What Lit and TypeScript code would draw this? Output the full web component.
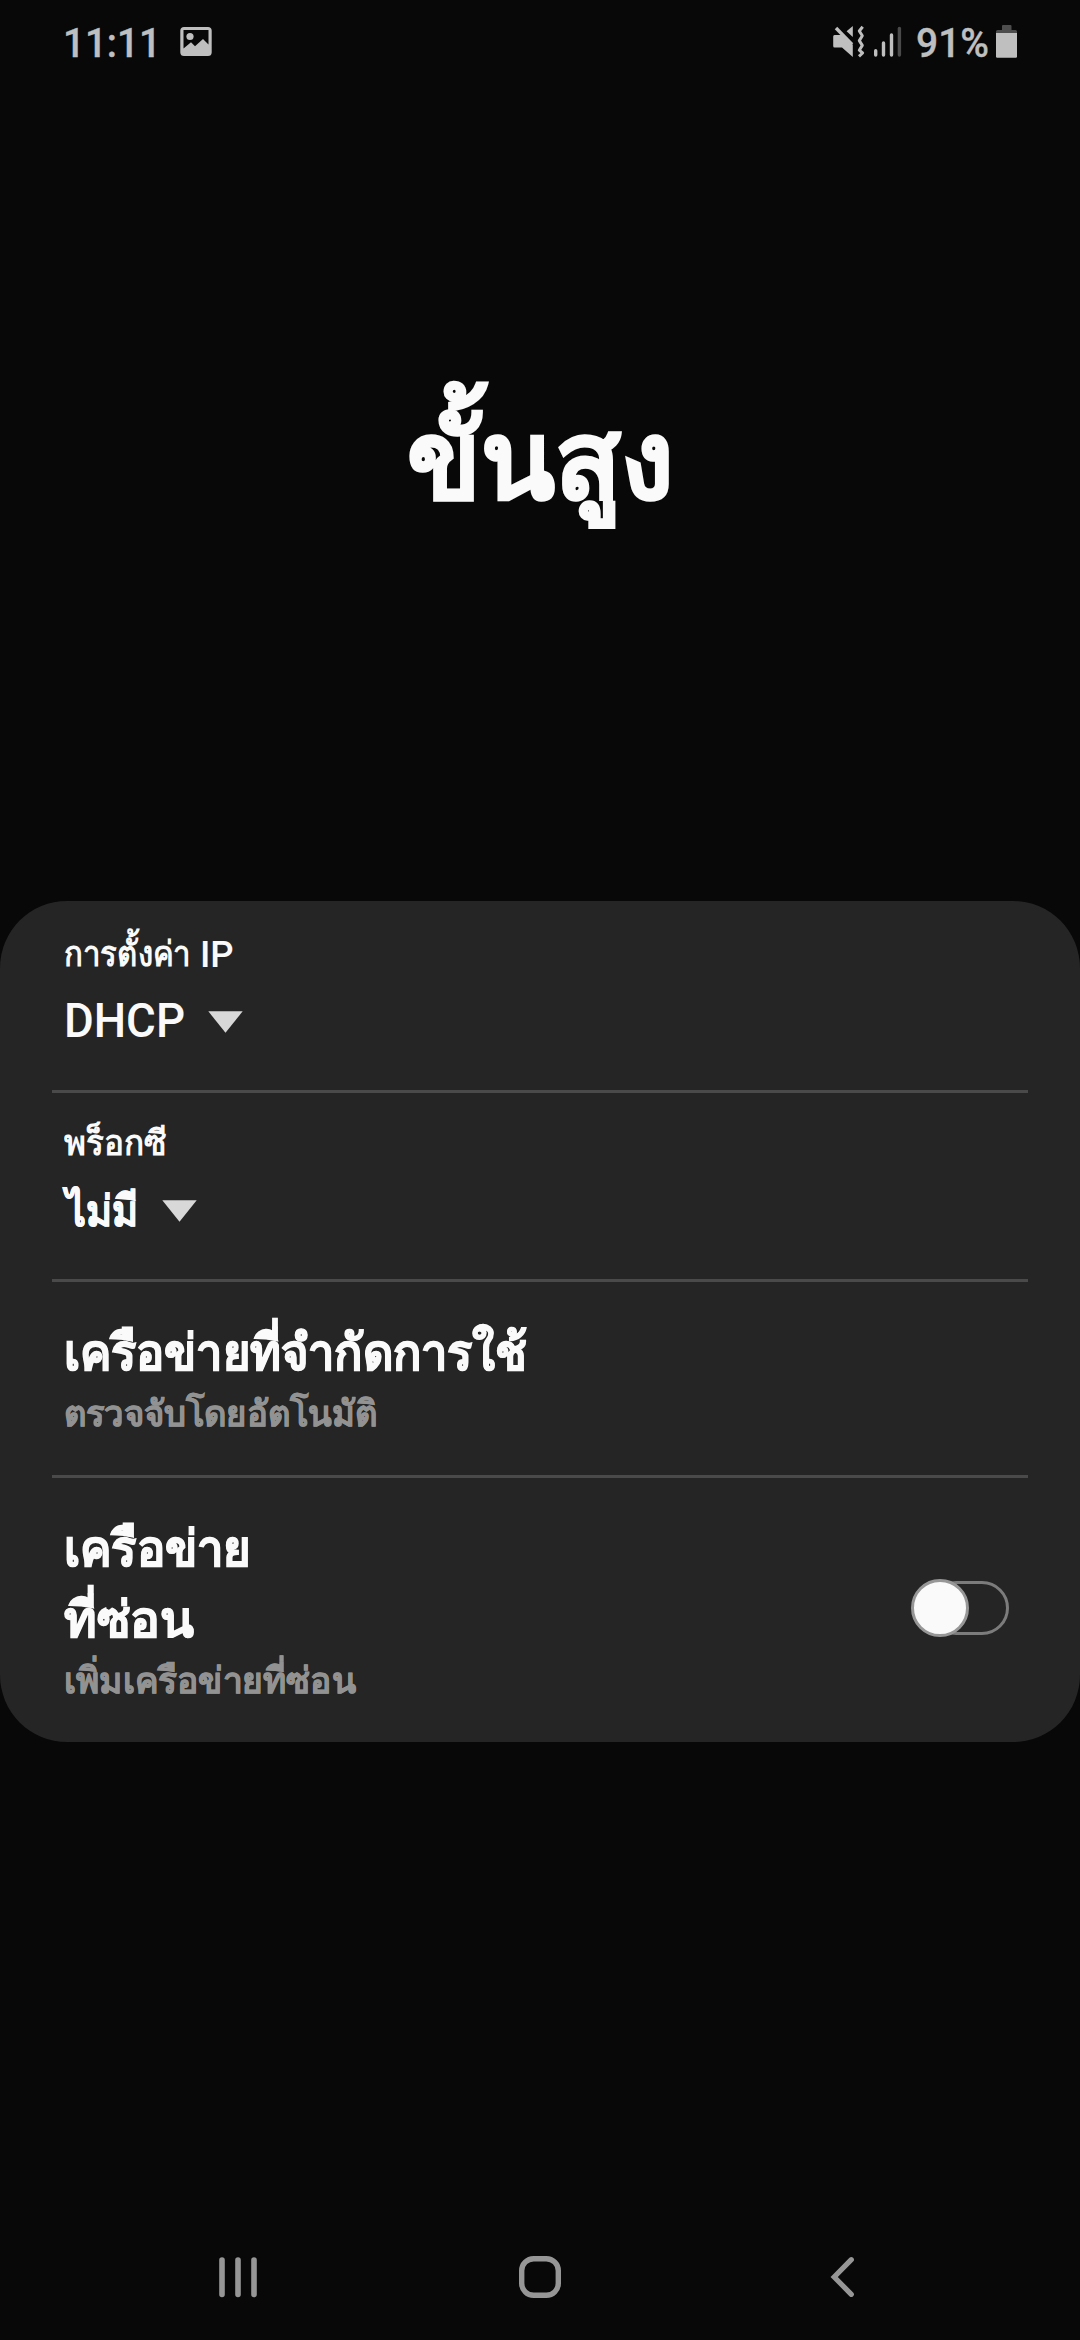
import { LitElement, html, css } from "lit";
import { customElement } from "lit/decorators.js";

const caret = html`<svg class="caret" width="35" height="22" viewBox="0 0 35 22">
  <path d="M0.3 0.3H34.7L17.5 21.8Z" fill="#d8d8d8" />
</svg>`;

@customElement("status-bar")
export class StatusBar extends LitElement {
  static styles = css`
    :host {
      display: flex;
      align-items: flex-start;
      justify-content: space-between;
      height: 84px;
      box-sizing: border-box;
      padding: 18px 62px 0 62.5px;
      color: #bfbfbf;
      font: 500 40.5px/48px Roboto, sans-serif;
    }
    .side {
      display: flex;
      align-items: flex-start;
    }
    .clock,
    .percent {
      padding-top: 1px;
      white-space: nowrap;
      transform-origin: 0 0;
      -webkit-text-stroke: 0.4px currentColor;
    }
    .clock {
      width: 117.5px;
      transform: scaleX(0.953);
    }
    .percent {
      width: 80px;
      transform: scaleX(0.962);
    }
    svg {
      display: block;
    }
    .signal {
      margin-right: 14px;
    }
  `;
  render() {
    return html`
      <div class="side">
        <div class="clock">11:11</div>
        <svg width="33" height="48" viewBox="180 18 33 48">
          <path fill="#bfbfbf" fill-rule="evenodd"
            d="M184 27H208A3.7 3.7 0 0 1 211.7 30.5V52.5A3.7 3.7 0 0 1 208 56H184A3.7 3.7 0 0 1 180.3 52.5V30.5A3.7 3.7 0 0 1 184 27ZM183.5 30V48.5L191 42.3L195 46.3L203 39L208.5 44.5V30Z" />
          <circle cx="190" cy="36.5" r="3.6" fill="#bfbfbf" />
        </svg>
      </div>
      <div class="side">
        <svg class="signal" width="70" height="48" viewBox="832 18 70 48">
          <g fill="#bfbfbf">
            <path d="M834.5 35H843L852.8 44.7V57L842 47.5H834.5Q833.2 47.5 833.2 46V36.5Q833.2 35 834.5 35Z" />
            <path d="M852.8 26V37L846.6 31.2Z" />
          </g>
          <path d="M836 28L852 44.5" stroke="#bfbfbf" stroke-width="3.4" fill="none" />
          <path d="M862.7 26.8L859.3 31L862.3 35.8L859.3 40.6L862.3 45.4L859.3 50.2L862.6 53L859 56.3" fill="none" stroke="#bfbfbf" stroke-width="3" stroke-linejoin="round" />
          <g stroke="#bfbfbf" stroke-width="3.4" stroke-linecap="round">
            <path d="M875.7 50.7V55M883.5 43V55M891.5 35V55" />
            <path d="M899.4 28.4V55" stroke="#4a4a4a" />
          </g>
        </svg>
        <div class="percent">91%</div>
        <svg width="22" height="48" viewBox="996 18 22 48">
          <path fill="#4d4d4d" d="M1002 26Q1002 25 1003 25H1010.5Q1011.5 25 1011.5 26V30H1015.5Q1017 30 1017 31.5V33H996V31.5Q996 30 997.5 30H1002Z" />
          <path fill="#bfbfbf" d="M996 33H1017V56.5Q1017 57.7 1015.8 57.7H997.2Q996 57.7 996 56.5Z" />
        </svg>
      </div>
    `;
  }
}

@customElement("nav-bar")
export class NavBar extends LitElement {
  static styles = css`
    :host {
      display: flex;
      justify-content: space-between;
      padding: 0 217px 40px;
    }
    svg {
      display: block;
      fill: none;
      stroke: #969696;
      stroke-linecap: round;
    }
  `;
  render() {
    return html`
      <svg width="42" height="46" viewBox="217 2254 42 46" stroke-width="5.6">
        <path d="M222 2260V2294.5M238 2260V2294.5M254 2260V2294.5" />
      </svg>
      <svg width="46" height="46" viewBox="517 2254 46 46" stroke-width="5.4">
        <rect x="521.7" y="2258.7" width="36.6" height="36.6" rx="12" />
      </svg>
      <svg width="42" height="46" viewBox="821 2254 42 46" stroke-width="5.2">
        <path d="M851.3 2259.7L834.2 2277L851.3 2294.3" stroke-linejoin="miter" />
      </svg>
    `;
  }
}

@customElement("app-root")
export class AppRoot extends LitElement {
  static styles = css`
    :host {
      display: flex;
      flex-direction: column;
      width: 1080px;
      height: 2340px;
      overflow: hidden;
      background: #080808;
      color: #fafafa;
      font-family: Roboto, serif;
      font-weight: 700;
    }
    .header {
      height: 817px;
      box-sizing: border-box;
      padding-top: 317px;
      text-align: center;
    }
    h1 {
      margin: 0;
      font-size: 108px;
      line-height: 120px;
      font-weight: 700;
      -webkit-text-stroke: 2px currentColor;
    }
    .card {
      height: 841px;
      border-radius: 67px;
      background: #252525;
      box-sizing: border-box;
      padding: 0 52px;
    }
    .row {
      box-sizing: border-box;
      padding: 0 12px;
      border-bottom: 3px solid #4a4a4a;
      white-space: nowrap;
    }
    .ip {
      height: 192px;
      padding-top: 29px;
    }
    .proxy {
      height: 189px;
      padding-top: 26px;
    }
    .metered {
      height: 196px;
      padding-top: 36px;
    }
    .hidden {
      padding-top: 36px;
      border-bottom: 0;
      display: flex;
      justify-content: space-between;
    }
    .t {
      display: block;
      transform-origin: 0 0;
    }
    .label {
      display: flex;
      font-size: 35px;
      line-height: 50px;
    }
    .latin {
      font-weight: 500;
    }
    .label .latin {
      font-size: 36.5px;
      margin-left: -7px;
    }
    .choice {
      display: flex;
      align-items: flex-start;
      line-height: 60px;
    }
    .ip .choice {
      margin: 11px 0 0 -0.5px;
      gap: 17px;
      font-size: 48px;
    }
    .proxy .choice {
      margin: 12px 0 0 2px;
      gap: 18px;
      font-size: 43px;
      -webkit-text-stroke: 0.7px currentColor;
    }
    .caret {
      display: block;
      margin-top: 20px;
    }
    .proxy .caret {
      margin-top: 19px;
    }
    .title {
      font-size: 50px;
      line-height: 71px;
      -webkit-text-stroke: 1px currentColor;
    }
    .sub {
      font-size: 36px;
      line-height: 50px;
      color: #929292;
      -webkit-text-stroke: 0.5px currentColor;
    }
    .n89 { transform: scaleX(0.89); }
    .n92 { transform: scaleX(0.92); }
    .n93 { transform: scaleX(0.939); }
    .n94 { transform: scaleX(0.943); }
    .n95 { transform: scaleX(0.95); }
    .n96 { transform: scaleX(0.961); }
    .n98 { transform: scaleX(0.98); }
    .n99 { transform: scaleX(0.99); }
    .toggle {
      width: 98px;
      height: 58px;
      margin: 65px 7px 0 0;
    }
    .toggle svg {
      display: block;
    }
    .spacer {
      flex: 1;
    }
  `;
  render() {
    return html`
      <status-bar></status-bar>
      <div class="header"><h1>ขั้นสูง</h1></div>
      <div class="card">
        <div class="row ip">
          <div class="label"><span class="t n89">การตั้งค่า</span> <span class="latin">IP</span></div>
          <div class="choice"><span class="t n95 latin">DHCP</span>${caret}</div>
        </div>
        <div class="row proxy">
          <div class="label"><span class="t n95">พร็อกซี</span></div>
          <div class="choice"><span class="t n92">ไม่มี</span>${caret}</div>
        </div>
        <div class="row metered">
          <div class="title t n93">เครือข่ายที่จำกัดการใช้</div>
          <div class="sub t n96">ตรวจจับโดยอัตโนมัติ</div>
        </div>
        <div class="row hidden">
          <div>
            <div class="title">
              <span class="t n94">เครือข่าย</span>
              <span class="t n99">ที่ซ่อน</span>
            </div>
            <div class="sub t n98">เพิ่มเครือข่ายที่ซ่อน</div>
          </div>
          <div class="toggle">
            <svg width="98" height="58" viewBox="0 0 98 58">
              <rect x="20" y="3.5" width="76.5" height="51" rx="25.5" fill="none" stroke="#7c7c7c" stroke-width="3" />
              <circle cx="29" cy="29" r="27.5" fill="#fafafa" stroke="#979797" stroke-width="3" />
            </svg>
          </div>
        </div>
      </div>
      <div class="spacer"></div>
      <nav-bar></nav-bar>
    `;
  }
}
